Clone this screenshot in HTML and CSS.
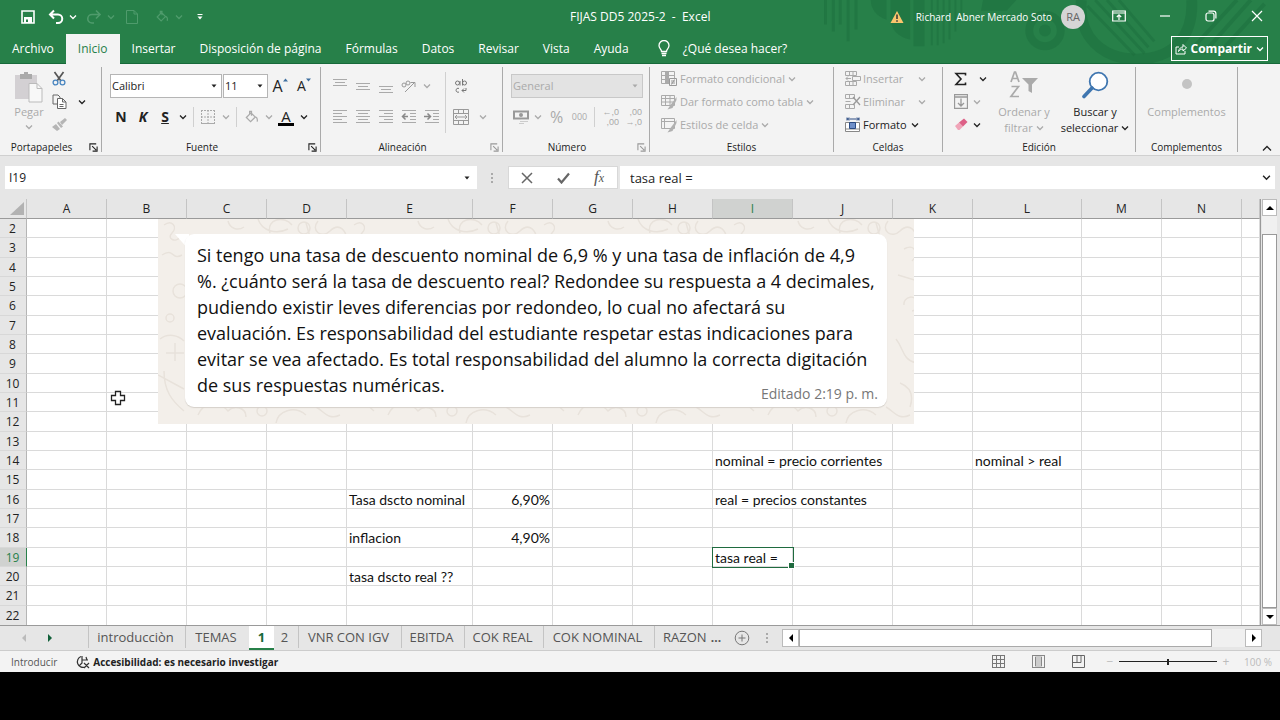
FILE: index.html
```html
<!DOCTYPE html>
<html lang="es">
<head>
<meta charset="utf-8">
<meta name="viewport" content="width=device-width, initial-scale=1">
<title>FIJAS DD5 2025-2 - Excel</title>
<link rel="stylesheet" href="styles.css">
</head>
<body>
<svg class="defs" aria-hidden="true">
  <symbol id="chev" viewBox="0 0 8 8"><path d="M1 2.5 4 5.5 7 2.5" fill="none" stroke="currentColor" stroke-width="1.3"/></symbol>
  <symbol id="tri" viewBox="0 0 8 8"><path d="M1.5 2.5h5L4 5.5z" fill="currentColor"/></symbol>
  <symbol id="launch" viewBox="0 0 10 10"><path d="M1 8V1h7M3.5 3.5 8 8M9 4v5H4" fill="none" stroke="currentColor" stroke-width="1.2"/></symbol>
  <symbol id="bucket" viewBox="0 0 16 16"><path d="M2.5 8 7.5 3l4.500 4.500-5 5zM6 5V1.500h2V6M12.500 7.500c2 1 2 3 1.500 5" fill="none" stroke="currentColor" stroke-width="1.300"/></symbol>
</svg>

<div class="window">
  <header class="top">
    <svg class="top-art" viewBox="0 0 470 64" aria-hidden="true">
      <g stroke="#1b6e3e" stroke-opacity=".5" fill="none">
        <path d="M12 0v25M20 0v32M27 0v25M35 0v42M43 0v30" stroke-width="3"/>
        <path d="M107 0v47" stroke-width="11"/>
        <path d="M120 0v46M126 0v46M132 0v44M138 0v40M144 0v32M150 0v18" stroke-width="2"/>
        <circle cx="235" cy="31" r="16" stroke-width="8"/>
        <path d="M272 0c-4 36 20 60 56 60 40 0 58-26 56-60" stroke-width="11"/>
        <path d="m278 6 48 50M286 0l50 54M298 0l42 48M310 0l36 42" stroke-width="3"/>
        <path d="m384 50 46-50M396 54l48-54M412 54l46-50" stroke-width="4"/>
      </g>
      <g fill="#1b6e3e" fill-opacity=".5"><path d="M58 0h16v20c-10-3-16-11-16-20zM78 0h20v40c-12-2-20-10-20-22zM172 0h34l-10 11h-26z"/><circle cx="235" cy="31" r="6"/></g>
    </svg>
    <div class="titlebar">
      <div class="quick">
        <button class="q" aria-label="Guardar"><svg width="14" height="14" viewBox="0 0 14 14"><path d="M1 1h12v12H1z" fill="none" stroke="#fff" stroke-width="1.600"/><path d="M3 2h8v4H3z" fill="#278049"/><path d="M3 7h8v6H3z" fill="#fff"/><path d="M5 9.500h2V12H5z" fill="#278049"/></svg></button>
        <button class="q" aria-label="Deshacer"><svg width="16" height="16" viewBox="0 0 16 16"><path d="M6 1.500 2 5.500l4 4M2.500 5.500H10a4 4 0 0 1 0 8.500H8" fill="none" stroke="#fff" stroke-width="2"/></svg></button>
        <button class="q-c" aria-label="Opciones de deshacer"><svg width="8" height="8"><use href="#chev"/></svg></button>
        <button class="q dim" aria-label="Rehacer"><svg width="16" height="16" viewBox="0 0 16 16"><path d="m10 1.500 4 4-4 4M13.500 5.500H6A4 4 0 0 0 6 14h2" fill="none" stroke="currentColor" stroke-width="1.600"/></svg></button>
        <button class="q-c dim" aria-label="Opciones de rehacer"><svg width="8" height="8"><use href="#chev"/></svg></button>
        <button class="q dim" aria-label="Nuevo"><svg width="14" height="16" viewBox="0 0 14 16"><path d="M1.500 1.500H9L12.500 5v9.500h-11zM9 1.500V5h3.500" fill="none" stroke="currentColor"/></svg></button>
        <button class="q dim fill" aria-label="Color de relleno"><svg width="14" height="14"><use href="#bucket"/></svg></button>
        <button class="q-c dim" aria-label="Opciones de relleno"><svg width="8" height="8"><use href="#chev"/></svg></button>
        <button class="q" aria-label="Personalizar barra"><svg width="8" height="8" viewBox="0 0 8 8"><path d="M1.500 1.500h5" stroke="#fff"/><path d="M1.500 3.500h5L4 6.500z" fill="#fff"/></svg></button>
      </div>
      <h1 class="doc">FIJAS DD5 2025-2&nbsp; -&nbsp; Excel</h1>
      <div class="account">
        <svg width="14" height="14" viewBox="0 0 14 14" aria-hidden="true"><path d="M7 1 13.500 13H.5z" fill="#fbc56d"/><path d="M7 4.500v4.500M7 10.200v1.600" stroke="#333" stroke-width="1.500"/></svg>
        <span>Richard&nbsp; Abner Mercado Soto</span>
        <button class="avatar">RA</button>
      </div>
      <div class="wincontrols">
        <button aria-label="Opciones de la cinta"><svg width="14" height="12" viewBox="0 0 14 12"><path d="M.7 1h12.600v10H.7zM.7 3h12.600M7 10V5M4.800 7 7 4.800 9.200 7" fill="none" stroke="#fff" stroke-width="1.200"/></svg></button>
        <button aria-label="Minimizar"><svg width="12" height="12" viewBox="0 0 12 12"><path d="M1 6h10" stroke="#fff" stroke-width="1.200"/></svg></button>
        <button aria-label="Restaurar"><svg width="12" height="12" viewBox="0 0 12 12"><rect x="1" y="3" width="8" height="8" rx="2" fill="none" stroke="#fff" stroke-width="1.200"/><path d="M3.500 1.200H8.500a2.500 2.500 0 0 1 2.400 2.400V8.500" fill="none" stroke="#fff" stroke-width="1.200"/></svg></button>
        <button aria-label="Cerrar"><svg width="12" height="12" viewBox="0 0 12 12"><path d="m1 1 10 10M11 1 1 11" stroke="#fff" stroke-width="1.200"/></svg></button>
      </div>
    </div>
    <nav class="tabs">
      <button>Archivo</button><button class="on">Inicio</button><button>Insertar</button><button>Disposición de página</button><button>Fórmulas</button><button>Datos</button><button>Revisar</button><button>Vista</button><button>Ayuda</button>
      <button class="tell"><svg width="12" height="17" viewBox="0 0 12 17" aria-hidden="true"><path d="M3.500 11.500C3.500 9 1 8.500 1 5.500a5 5 0 0 1 10 0c0 3-2.500 3.500-2.500 6zM3.500 13.500h5M4 15.500h4" fill="none" stroke="#fff" stroke-width="1.300"/></svg>¿Qué desea hacer?</button>
      <button class="share"><svg width="12" height="12" viewBox="0 0 12 12" aria-hidden="true"><path d="M4 4H1v7h9V8M3.500 8.500C4 5.500 6 4 8 4V1.500L11.500 5 8 8V6C6 6 4.500 7 3.500 8.500z" fill="none" stroke="#fff"/></svg>Compartir<svg width="8" height="8"><use href="#chev"/></svg></button>
    </nav>
  </header>

  <section class="ribbon" aria-label="Cinta de opciones">
    <div class="group g-clip">
      <div class="gbody">
        <button class="big off paste"><svg width="30" height="32" viewBox="0 0 30 32" aria-hidden="true"><path d="M1 4h22v24H1z" fill="#d3d0d3"/><path d="M6 3h4V1h4v2h4v5H6z" fill="#aaa"/><path d="M15 12.500h8l5 5V31H15z" fill="#f8f8f8" stroke="#bbb"/><path d="M23 12.500v5h5" fill="none" stroke="#bbb"/></svg><span>Pegar</span><svg width="8" height="8"><use href="#chev"/></svg></button>
        <div class="stack">
          <button class="line" aria-label="Cortar"><svg width="14" height="15" viewBox="0 0 14 15"><path d="M2.500 1 9 10M11.500 1 5 10" stroke="#555" stroke-width="1.700"/><circle cx="3.500" cy="11.500" r="2.400" fill="none" stroke="#4a86c0" stroke-width="1.300"/><circle cx="10.500" cy="11.500" r="2.400" fill="none" stroke="#4a86c0" stroke-width="1.300"/></svg></button>
          <button class="line" aria-label="Copiar"><svg width="15" height="15" viewBox="0 0 15 15"><path d="M5 10H1V1h5l2 2v1" fill="none" stroke="#666"/><path d="M5.500 4.500h5L14 8v6.500H5.500zM10.500 4.500V8H14M7.500 10.500h4M7.500 12.500h4" fill="#fff" stroke="#666"/></svg><svg class="far" width="8" height="8"><use href="#chev"/></svg></button>
          <button class="line off" aria-label="Copiar formato"><svg width="15" height="13" viewBox="0 0 15 13"><path d="m8 4 5-4 2 2-5 5zM6.500 3.500l4.500 5-2 1.500L5 5zM4 6l4 5-3 2-5-4z" fill="#b5b5b5"/></svg></button>
        </div>
      </div>
      <footer>Portapapeles<button class="launch" aria-label="Portapapeles, más opciones"><svg width="9" height="9"><use href="#launch"/></svg></button></footer>
    </div>

    <div class="group g-font">
      <div class="gbody rows">
        <div class="row">
          <span class="combo name"><select aria-label="Fuente"><option>Calibri</option></select><svg width="8" height="8"><use href="#tri"/></svg></span>
          <span class="combo size"><select aria-label="Tamaño de fuente"><option>11</option></select><svg width="8" height="8"><use href="#tri"/></svg></span>
          <button class="grow" aria-label="Aumentar tamaño de fuente"><span>A</span><svg width="5" height="4" viewBox="0 0 5 4"><path d="M0 3.500 2.500.5 5 3.500z" fill="#3f6f9f"/></svg></button>
          <button class="grow small" aria-label="Disminuir tamaño de fuente"><span>A</span><svg width="5" height="4" viewBox="0 0 5 4"><path d="M0 .5h5L2.500 3.500z" fill="#3f6f9f"/></svg></button>
        </div>
        <div class="row r2">
          <button class="b22 bold">N</button><button class="b22 bold ital">K</button><button class="b22 bold und">S</button><button class="b14" aria-label="Subrayado"><svg width="8" height="8"><use href="#chev"/></svg></button><i class="sep"></i>
          <button class="b22 off" aria-label="Bordes"><svg width="16" height="16" viewBox="0 0 16 16"><path d="M1.500 1v13M8 1v13M14.500 1v13M1 1.500h14M1 8h14" fill="none" stroke="#aaa" stroke-dasharray="2 1"/><path d="M1 14.500h14" stroke="#aaa"/></svg></button><button class="b14 off" aria-label="Más bordes"><svg width="8" height="8"><use href="#chev"/></svg></button><i class="sep"></i>
          <button class="b22 off" aria-label="Relleno"><svg width="15" height="15"><use href="#bucket"/></svg></button><button class="b14 off" aria-label="Más rellenos"><svg width="8" height="8"><use href="#chev"/></svg></button>
          <button class="b22 fcolor" aria-label="Color de fuente">A</button><button class="b14" aria-label="Más colores"><svg width="8" height="8"><use href="#chev"/></svg></button>
        </div>
      </div>
      <footer>Fuente<button class="launch" aria-label="Fuente, más opciones"><svg width="9" height="9"><use href="#launch"/></svg></button></footer>
    </div>

    <div class="group g-align">
      <div class="gbody rows off">
        <div class="row">
          <button class="b23" aria-label="Alinear arriba"><svg width="14" height="14" viewBox="0 0 14 14"><path d="M0 .5h14M2 3.500h10M0 6.500h14" stroke="#aaa"/></svg></button><button class="b23" aria-label="Alinear al medio"><svg width="14" height="14" viewBox="0 0 14 14"><path d="M0 4.500h14M2 7.500h10M0 10.500h14" stroke="#aaa"/></svg></button><button class="b23" aria-label="Alinear abajo"><svg width="14" height="14" viewBox="0 0 14 14"><path d="M0 7.500h14M2 10.500h10M0 13.500h14" stroke="#aaa"/></svg></button><button class="b23" aria-label="Orientación"><svg width="16" height="14" viewBox="0 0 16 14"><path d="m4 13 9-9M9.500 3.500H14V8" fill="none" stroke="#999"/><circle cx="3" cy="6" r="2" fill="none" stroke="#999"/><circle cx="7" cy="4" r="2" fill="none" stroke="#999"/></svg></button><button class="b14" aria-label="Más orientación"><svg width="8" height="8"><use href="#chev"/></svg></button>
        </div>
        <div class="row r2">
          <button class="b23" aria-label="Izquierda"><svg width="14" height="14" viewBox="0 0 14 14"><path d="M0 .5h14M0 3.500h9M0 6.500h14M0 9.500h9M0 12.500h14" stroke="#aaa"/></svg></button><button class="b23" aria-label="Centrar"><svg width="14" height="14" viewBox="0 0 14 14"><path d="M0 .5h14M2 3.500h10M0 6.500h14M2 9.500h10M0 12.500h14" stroke="#aaa"/></svg></button><button class="b23" aria-label="Derecha"><svg width="14" height="14" viewBox="0 0 14 14"><path d="M0 .5h14M5 3.500h9M0 6.500h14M5 9.500h9M0 12.500h14" stroke="#aaa"/></svg></button><button class="b23" aria-label="Disminuir sangría"><svg width="16" height="14" viewBox="0 0 16 14"><path d="M1 .5h14M9 3.500h6M9 6.500h6M9 9.500h6M1 12.500h14" stroke="#aaa"/><path d="M7 6.500H2M4.500 3.500l-3 3 3 3" fill="none" stroke="#888" stroke-width="1.500"/></svg></button><button class="b23" aria-label="Aumentar sangría"><svg width="16" height="14" viewBox="0 0 16 14"><path d="M1 .5h14M9 3.500h6M9 6.500h6M9 9.500h6M1 12.500h14" stroke="#aaa"/><path d="M0 6.500h6M3.500 3.500l3 3-3 3" fill="none" stroke="#888" stroke-width="1.500"/></svg></button>
        </div>
      </div>
      <div class="gbody rows off merge">
        <div class="row"><button class="b22 wrap" aria-label="Ajustar texto"><svg width="14" height="16" viewBox="0 0 14 16"><circle cx="3.500" cy="5" r="2" fill="none" stroke="#777"/><path d="M6 3v4.500M8.500 1v6.500M5 10.500a2 2 0 1 0 0 3.500M12 10v2.500H8M10 10.500l-2 2 2 2" fill="none" stroke="#777"/><circle cx="10.500" cy="5" r="2" fill="none" stroke="#777"/></svg></button></div>
        <div class="row r2"><button class="b22" aria-label="Combinar y centrar"><svg width="16" height="16" viewBox="0 0 16 16"><path d="M.5.500h15v15H.5zM.5 4.500h15M.5 11.500h15M5.500.5v4M10.500.5v4M5.500 11.500v4M10.500 11.500v4M2 8h12M4 6 2 8l2 2M12 6l2 2-2 2" fill="none" stroke="#999"/></svg></button><button class="b22" aria-label="Más combinar"><svg width="8" height="8"><use href="#chev"/></svg></button></div>
      </div>
      <footer>Alineación<button class="launch pale" aria-label="Alineación, más opciones"><svg width="9" height="9"><use href="#launch"/></svg></button></footer>
    </div>

    <div class="group g-num">
      <div class="gbody rows">
        <div class="row"><span class="combo general"><select aria-label="Formato de número" disabled><option>General</option></select><svg width="8" height="8"><use href="#tri"/></svg></span></div>
        <div class="row r2 off">
          <button class="b22" aria-label="Moneda"><svg width="17" height="15" viewBox="0 0 17 15"><path d="M1 1.500h14v7H1z" fill="none" stroke="#999" stroke-width="2"/><circle cx="8" cy="5" r="2" fill="#999"/><path d="M8 9.500h8M7 11.500h8M6 13.500h5" stroke="#ccc"/></svg></button><button class="b14" aria-label="Más monedas"><svg width="8" height="8"><use href="#chev"/></svg></button>
          <button class="b23 pct" aria-label="Porcentaje">%</button><button class="b23 mil" aria-label="Millares">000</button><i class="sep"></i>
          <button class="b23 dec"><span>←,0</span><span>,00</span></button><button class="b23 dec"><span>,00</span><span>→,0</span></button>
        </div>
      </div>
      <footer>Número<button class="launch pale" aria-label="Número, más opciones"><svg width="9" height="9"><use href="#launch"/></svg></button></footer>
    </div>

    <div class="group g-style">
      <div class="gbody stack off">
        <button class="line"><svg width="16" height="16" viewBox="0 0 16 16" aria-hidden="true"><path d="M.5.500h13v12H.5zM.5 4.500h13M.5 8.500h13M4.500.5v12" fill="none" stroke="#aaa"/><path d="M5 1h3v11H5z" fill="#aaa"/><path d="M8.500 7.500h7v7h-7zM10 10h4M10 12h4M13.500 8.500l-3 5" fill="#f3f3f3" stroke="#999"/></svg>Formato condicional<svg width="8" height="8"><use href="#chev"/></svg></button>
        <button class="line"><svg width="16" height="16" viewBox="0 0 16 16" aria-hidden="true"><path d="M.5 1.500h13v10H.5zM.5 4.500h13M.5 8h13M4.500 1.500v10M9 1.500v10" fill="none" stroke="#aaa"/><path d="m15.500 3-6 8-3 4.500 5-1.500 4-8z" fill="#b0b0b0"/></svg>Dar formato como tabla<svg width="8" height="8"><use href="#chev"/></svg></button>
        <button class="line"><svg width="16" height="16" viewBox="0 0 16 16" aria-hidden="true"><path d="M.5 1.500h13v10H.5zM.5 4.500h13M3.500 1.500v10" fill="none" stroke="#aaa"/><path d="m15.500 3-6 8-3 4.500 5-1.500 4-8z" fill="#b0b0b0"/></svg>Estilos de celda<svg width="8" height="8"><use href="#chev"/></svg></button>
      </div>
      <footer>Estilos</footer>
    </div>

    <div class="group g-cells">
      <div class="gbody stack">
        <button class="line off"><svg width="16" height="16" viewBox="0 0 16 16" aria-hidden="true"><path d="M.5.500h11v4H.5zM.5 10.500h11v4H.5zM4.500.5v4M8 .5v4M4.500 10.500v4M8 10.500v4M7.500 5.500h8v4h-8zM6 7.500H1M3 5.500l-2 2 2 2" fill="none" stroke="#aaa"/></svg><span class="lbl">Insertar</span><svg width="8" height="8"><use href="#chev"/></svg></button>
        <button class="line off"><svg width="16" height="16" viewBox="0 0 16 16" aria-hidden="true"><path d="M.5.500h9v4h-9zM.5 10.500h9v4h-9zM4.500.5v4M4.500 10.500v4M.5 7.500h5" fill="none" stroke="#aaa"/><path d="m8 3 7 8M15 3l-7 8" stroke="#999" stroke-width="1.300"/></svg><span class="lbl">Eliminar</span><svg width="8" height="8"><use href="#chev"/></svg></button>
        <button class="line"><svg width="16" height="16" viewBox="0 0 16 16" aria-hidden="true"><path d="M2 .5v3M14 .5v3M2 2h12M4 .5 2.500 2 4 3.500M12 .5 13.500 2 12 3.500" fill="none" stroke="#2b4b82"/><path d="M.5 5.500h14v9H.5zM.5 12h14" fill="#fff" stroke="#888"/><path d="M4.500 5.500h6v6h-6z" fill="#6f8fc8" stroke="#2b4b82"/></svg><span class="fmt">Formato</span><svg width="8" height="8"><use href="#chev"/></svg></button>
      </div>
      <footer>Celdas</footer>
    </div>

    <div class="group g-edit">
      <div class="gbody stack">
        <button class="line sum" aria-label="Autosuma"><svg width="13" height="14" viewBox="0 0 13 14"><path d="M11.500 3.500V1.500H2L7 7l-5 5.500h9.500v-2" fill="none" stroke="#222" stroke-width="1.600"/></svg><svg width="8" height="8"><use href="#chev"/></svg></button>
        <button class="line off" aria-label="Rellenar"><svg width="14" height="15" viewBox="0 0 14 15"><path d="M.5.500h13v14H.5zM.5 3h13M7 4.500V12M4 9l3 3 3-3" fill="none" stroke="#999" stroke-width="1.300"/></svg><svg width="8" height="8"><use href="#chev"/></svg></button>
        <button class="line" aria-label="Borrar"><svg width="14" height="13" viewBox="0 0 14 13"><path d="m1 8 4-3.500 4 4L5.500 12H4z" fill="#f0a4b8"/><path d="m5 4.500 5-4 3.500 3.500-4.500 4.500z" fill="#dd5f86"/></svg><svg width="8" height="8"><use href="#chev"/></svg></button>
      </div>
      <button class="big off sort"><svg width="30" height="28" viewBox="0 0 30 28" aria-hidden="true"><path d="m2 11 3.500-10h1L10 11M3.500 7.500h5M2.500 15.500h7L2 25.500h8" fill="none" stroke="#aaa" stroke-width="1.700"/><path d="M13 7h16l-6 6.500V22l-3.500-2v-6.500z" fill="#aaa"/></svg><span>Ordenar y</span><span>filtrar <svg width="8" height="8"><use href="#chev"/></svg></span></button>
      <button class="big find"><svg width="28" height="28" viewBox="0 0 28 28" aria-hidden="true"><circle cx="17.500" cy="10.500" r="8.800" fill="#fff" stroke="#3f76b0" stroke-width="1.800"/><path d="m11 17-8 8.500" stroke="#3f76b0" stroke-width="3.600" stroke-linecap="round"/></svg><span>Buscar y</span><span>seleccionar <svg width="8" height="8"><use href="#chev"/></svg></span></button>
      <footer>Edición</footer>
    </div>

    <div class="group g-add">
      <button class="big off"><svg width="28" height="28" viewBox="0 0 28 28" aria-hidden="true"><circle cx="14" cy="13" r="5" fill="#c3c3c3"/></svg><span>Complementos</span></button>
      <footer>Complementos</footer>
    </div>
    <button class="collapse" aria-label="Contraer la cinta"><svg width="10" height="7" viewBox="0 0 10 7"><path d="m1 5.500 4-4 4 4" fill="none" stroke="#222" stroke-width="1.300"/></svg></button>
  </section>

  <section class="fbar" aria-label="Barra de fórmulas">
    <div class="namebox"><input aria-label="Cuadro de nombres" value="I19"><svg width="8" height="8"><use href="#tri"/></svg></div>
    <svg class="dots" width="4" height="12" viewBox="0 0 4 12" aria-hidden="true"><path d="M1 1h2v2H1zM1 5h2v2H1zM1 9h2v2H1z" fill="#aaa"/></svg>
    <div class="fbuttons">
      <button aria-label="Cancelar"><svg width="12" height="12" viewBox="0 0 12 12"><path d="m1 1 10 10M11 1 1 11" stroke="#666" stroke-width="1.500"/></svg></button>
      <button aria-label="Introducir"><svg width="13" height="12" viewBox="0 0 13 12"><path d="m1 6.500 3.500 4L12 1.500" fill="none" stroke="#666" stroke-width="2.200"/></svg></button>
      <button class="fx" aria-label="Insertar función">f<small>x</small></button>
    </div>
    <div class="formula"><input aria-label="Fórmula" value="tasa real ="><button aria-label="Expandir"><svg width="9" height="9"><use href="#chev"/></svg></button></div>
  </section>

  <main class="sheet">
    <div class="grid">
      <table>
        <colgroup><col class="c-n"><col span="4" class="c-s"><col class="c-e"><col span="4" class="c-s"><col class="c-j"><col class="c-s"><col class="c-l"><col span="2" class="c-s"><col></colgroup>
        <thead><tr><th class="corner"><svg width="14" height="13" viewBox="0 0 14 13" aria-hidden="true"><path d="M14 0v13H0z" fill="#b2b2b2"/></svg></th><th>A</th><th>B</th><th>C</th><th>D</th><th>E</th><th>F</th><th>G</th><th>H</th><th class="sel">I</th><th>J</th><th>K</th><th>L</th><th>M</th><th>N</th><th></th></tr></thead>
        <tbody>
          <tr><th>2</th><td></td><td></td><td></td><td></td><td></td><td></td><td></td><td></td><td></td><td></td><td></td><td></td><td></td><td></td><td></td></tr>
          <tr><th>3</th><td></td><td></td><td></td><td></td><td></td><td></td><td></td><td></td><td></td><td></td><td></td><td></td><td></td><td></td><td></td></tr>
          <tr><th>4</th><td></td><td></td><td></td><td></td><td></td><td></td><td></td><td></td><td></td><td></td><td></td><td></td><td></td><td></td><td></td></tr>
          <tr><th>5</th><td></td><td></td><td></td><td></td><td></td><td></td><td></td><td></td><td></td><td></td><td></td><td></td><td></td><td></td><td></td></tr>
          <tr><th>6</th><td></td><td></td><td></td><td></td><td></td><td></td><td></td><td></td><td></td><td></td><td></td><td></td><td></td><td></td><td></td></tr>
          <tr><th>7</th><td></td><td></td><td></td><td></td><td></td><td></td><td></td><td></td><td></td><td></td><td></td><td></td><td></td><td></td><td></td></tr>
          <tr><th>8</th><td></td><td></td><td></td><td></td><td></td><td></td><td></td><td></td><td></td><td></td><td></td><td></td><td></td><td></td><td></td></tr>
          <tr><th>9</th><td></td><td></td><td></td><td></td><td></td><td></td><td></td><td></td><td></td><td></td><td></td><td></td><td></td><td></td><td></td></tr>
          <tr><th>10</th><td></td><td></td><td></td><td></td><td></td><td></td><td></td><td></td><td></td><td></td><td></td><td></td><td></td><td></td><td></td></tr>
          <tr><th>11</th><td></td><td></td><td></td><td></td><td></td><td></td><td></td><td></td><td></td><td></td><td></td><td></td><td></td><td></td><td></td></tr>
          <tr><th>12</th><td></td><td></td><td></td><td></td><td></td><td></td><td></td><td></td><td></td><td></td><td></td><td></td><td></td><td></td><td></td></tr>
          <tr><th>13</th><td></td><td></td><td></td><td></td><td></td><td></td><td></td><td></td><td></td><td></td><td></td><td></td><td></td><td></td><td></td></tr>
          <tr><th>14</th><td></td><td></td><td></td><td></td><td></td><td></td><td></td><td></td><td colspan="2">nominal = precio corrientes</td><td></td><td>nominal &gt; real</td><td></td><td></td><td></td></tr>
          <tr><th>15</th><td></td><td></td><td></td><td></td><td></td><td></td><td></td><td></td><td></td><td></td><td></td><td></td><td></td><td></td><td></td></tr>
          <tr><th>16</th><td></td><td></td><td></td><td></td><td>Tasa dscto nominal</td><td class="num">6,90%</td><td></td><td></td><td colspan="2">real = precios constantes</td><td></td><td></td><td></td><td></td><td></td></tr>
          <tr><th>17</th><td></td><td></td><td></td><td></td><td></td><td></td><td></td><td></td><td></td><td></td><td></td><td></td><td></td><td></td><td></td></tr>
          <tr><th>18</th><td></td><td></td><td></td><td></td><td>inflacion</td><td class="num">4,90%</td><td></td><td></td><td></td><td></td><td></td><td></td><td></td><td></td><td></td></tr>
          <tr><th class="sel">19</th><td></td><td></td><td></td><td></td><td></td><td></td><td></td><td></td><td class="active">tasa real =</td><td></td><td></td><td></td><td></td><td></td><td></td></tr>
          <tr><th>20</th><td></td><td></td><td></td><td></td><td>tasa dscto real ??</td><td></td><td></td><td></td><td></td><td></td><td></td><td></td><td></td><td></td><td></td></tr>
          <tr><th>21</th><td></td><td></td><td></td><td></td><td></td><td></td><td></td><td></td><td></td><td></td><td></td><td></td><td></td><td></td><td></td></tr>
          <tr><th>22</th><td></td><td></td><td></td><td></td><td></td><td></td><td></td><td></td><td></td><td></td><td></td><td></td><td></td><td></td><td></td></tr>
        </tbody>
      </table>
      <figure class="chat">
        <svg class="doodles" aria-hidden="true" width="100%" height="100%">
          <defs><pattern id="doodle" width="190" height="205" patternUnits="userSpaceOnUse"><g fill="none" stroke="#e8e2db" stroke-width="1.500">
            <path d="M6 6c8-6 14 2 8 8s4 10 8 4M4 36c12-8 10 6 20 0M70 2c2 8 10 10 16 6"/><circle cx="22" cy="72" r="7"/><circle cx="12" cy="99" r="4"/>
            <path d="M2 120c8-6 18-4 24 2M8 134h18M17 124v18M0 156l26 14M6 152c0 20 8 30 20 40M40 196c6-14 22-14 30-4 6-6 18-4 18 6"/>
            <path d="M100 0c4 12 18 16 30 10M112 14c-4-14 14-18 22-8M148 4l4 14M160 2c-8 10 4 18 12 10s14-2 16 4"/><circle cx="146" cy="9" r="6"/><circle cx="104" cy="192" r="5"/>
            <path d="M118 204c2-12 18-18 30-8M158 188c8 4 12 14 24 8M176 30c10-6 16 4 8 12M170 56l20 6M176 86a7 7 0 1 1 8 6M168 120c8 10 6 20 20 24M172 164c10 4 14 12 10 24"/>
          </g></pattern></defs>
          <rect width="100%" height="100%" fill="url(#doodle)"/>
        </svg>
        <svg class="tail" width="14" height="16" viewBox="0 0 14 16" aria-hidden="true"><path d="M0 0h14v16z" fill="#fff"/></svg>
        <blockquote class="bubble">Si tengo una tasa de descuento nominal de 6,9 % y una tasa de inflación de 4,9<br>%. ¿cuánto será la tasa de descuento real? Redondee su respuesta a 4 decimales,<br>pudiendo existir leves diferencias por redondeo, lo cual no afectará su<br>evaluación. Es responsabilidad del estudiante respetar estas indicaciones para<br>evitar se vea afectado. Es total responsabilidad del alumno la correcta digitación<br>de sus respuestas numéricas.<span class="stamp">Editado 2:19 p. m.</span></blockquote>
      </figure>
      <svg class="cursor" width="16" height="16" viewBox="0 0 16 16" aria-hidden="true"><path d="M5.500 1.500h5v4h4v5h-4v4h-5v-4h-4v-5h4z" fill="#fff" stroke="#222" stroke-width="1.300"/></svg>
    </div>
    <div class="vscroll">
      <button aria-label="Subir"><svg width="8" height="8" viewBox="0 0 8 8"><path d="M0 6h8L4 2z"/></svg></button>
      <div class="vtrack"><div class="vthumb"></div></div>
      <button aria-label="Bajar"><svg width="8" height="8" viewBox="0 0 8 8"><path d="M0 2h8L4 6z"/></svg></button>
    </div>
  </main>

  <nav class="sheets" aria-label="Hojas">
    <div class="arrows"><button aria-label="Hoja anterior"><svg width="8" height="8" viewBox="0 0 8 8"><path d="M6 0v8L2 4z" fill="#bbb"/></svg></button><button aria-label="Hoja siguiente"><svg width="8" height="8" viewBox="0 0 8 8"><path d="M2 0v8l4-4z" fill="#12613a"/></svg></button></div>
    <div class="stabs"><button>introducciòn</button><button>TEMAS</button><button class="on">1</button><button>2</button><button>VNR CON IGV</button><button>EBITDA</button><button>COK REAL</button><button>COK NOMINAL</button><button class="cut">RAZON</button></div>
    <button class="more">...</button>
    <button class="plus" aria-label="Hoja nueva"><svg width="16" height="16" viewBox="0 0 16 16"><circle cx="8" cy="8" r="6.800" fill="none" stroke="#777"/><path d="M8 4.500v7M4.500 8h7" stroke="#777"/></svg></button>
    <svg class="dots" width="4" height="12" viewBox="0 0 4 12" aria-hidden="true"><path d="M1 1h2v2H1zM1 5h2v2H1zM1 9h2v2H1z" fill="#aaa"/></svg>
    <div class="hscroll"><button aria-label="Izquierda"><svg width="8" height="8" viewBox="0 0 8 8"><path d="M6 0v8L2 4z"/></svg></button><div class="htrack"><div class="hthumb"></div></div><button aria-label="Derecha"><svg width="8" height="8" viewBox="0 0 8 8"><path d="M2 0v8l4-4z"/></svg></button></div>
  </nav>

  <footer class="status">
    <span class="mode">Introducir</span>
    <button class="a11y"><svg width="14" height="14" viewBox="0 0 14 14" aria-hidden="true"><path d="M5 1.500a5.500 5.500 0 1 0 4 10.500M6 1v4h6M6 5v3l-3 3M8 8l5 5M13 8l-5 5M10 2l1 3" fill="none" stroke="#333" stroke-width="1.200"/></svg>Accesibilidad: es necesario investigar</button>
    <div class="views">
      <button aria-label="Normal"><svg width="13" height="13" viewBox="0 0 13 13"><path d="M.5 0v12.500M4.500 0v12.500M8.500 0v12.500M12.500 0v12.500M0 4.500h13M0 8.500h13M0 12.500h13M0 .5h13" stroke="#777"/></svg></button>
      <button aria-label="Diseño de página"><svg width="13" height="13" viewBox="0 0 13 13"><path d="M3 0h7v13H3z" fill="#ccc"/><path d="M.5 0v13M3.500 2v9M9.500 2v9M12.500 0v13M0 .5h13M0 12.500h13" stroke="#888"/></svg></button>
      <button aria-label="Salto de página"><svg width="13" height="13" viewBox="0 0 13 13"><path d="M.5.500h12v12H.5zM.5 7.500h8.500V.5M5 .5v7" fill="none" stroke="#666"/></svg></button>
    </div>
    <div class="zoom"><button aria-label="Alejar">−</button><input type="range" min="10" max="190" value="100" aria-label="Zoom"><button aria-label="Acercar">+</button><span>100 %</span></div>
  </footer>
</div>
</body>
</html>
```
FILE: styles.css
```css
* { box-sizing: border-box; }
html, body { height: 100%; }
body { margin: 0; background: #000; color: #222; font: 12px/16px "Open Sans", "Noto Sans", sans-serif; }
button, input, select { font: inherit; color: inherit; border: 0; background: none; padding: 0; margin: 0; border-radius: 0; }
svg { display: block; flex: none; }
.defs { position: absolute; width: 0; height: 0; }
.window { display: flex; flex-direction: column; background: #e6e6e6; }

/* title bar and ribbon tabs */
.top { position: relative; background: #278049; color: #fff; border-bottom: 1px solid #17693a; }
.top-art { position: absolute; right: 0; top: 0; width: 470px; height: 63px; }
.titlebar { position: relative; display: grid; grid-template-columns: 570px 1fr auto auto; height: 34px; }
.quick { display: flex; align-items: center; padding-left: 16px; }
.q { display: flex; justify-content: center; width: 24px; }
.q-c { display: flex; justify-content: center; width: 10px; margin-right: 4px; }
.quick .q:first-child { margin-right: 4px; }
.dim { color: #4f9b6c; }
.fill { margin-left: 6px; }
.doc { margin: 0; font-size: 12px; font-weight: 400; line-height: 34px; }
.account { display: flex; align-items: center; font-size: 10px; }
.account svg { margin-right: 12px; }
.avatar { width: 24px; height: 24px; margin: 0 11px 0 9px; border-radius: 50%; background: #d5d5d5; color: #666; font-size: 11px; }
.wincontrols { display: flex; align-items: center; }
.wincontrols button { display: flex; justify-content: center; width: 46px; padding-bottom: 2px; }
.tabs { position: relative; display: flex; height: 29px; padding-right: 12px; }
.tabs button { padding: 0 12px; }
.tabs .on { background: #f3f3f3; color: #278049; height: 30px; }
.tabs .tell { display: flex; align-items: center; gap: 13px; padding-left: 17px; }
.tabs .share { display: flex; align-items: center; gap: 4px; height: 25px; margin: 2px 0 0 auto; padding: 0 3px; border: 1px solid #fff; font-weight: 700; font-size: 12px; }

/* ribbon */
.ribbon { display: flex; height: 92px; padding: 3px 0 0; background: #f3f3f3; border-bottom: 1px solid #d0d0d0; font-size: 11px; }
.group { display: grid; grid-template-rows: 1fr 16px; justify-content: start; border-right: 1px solid #aaa; margin-bottom: 3px; flex: none; }
.group > * { grid-row: 1; min-height: 0; }
.group > footer { position: relative; grid-row: 2; grid-column: 1 / -1; text-align: center; font-size: 10px; line-height: 22px; }
.launch { position: absolute; right: 3px; top: 7px; }
.g-clip footer, .g-font footer, .g-align footer, .g-num footer { padding-right: 18px; }
.pale { color: #999; }
.off { color: #aaa; }
.g-clip { width: 102px; grid-template-columns: 100%; }
.g-font { width: 219px; grid-template-columns: 100%; }
.g-align { width: 182px; grid-template-columns: 124px 1fr; justify-content: stretch; }
.g-num { width: 147px; grid-template-columns: 100%; }
.g-style { width: 184px; grid-template-columns: 100%; }
.g-cells { width: 109px; grid-template-columns: 100%; }
.g-edit { width: 193px; grid-template-columns: 50px 62px 1fr; justify-content: stretch; }
.g-add { width: 102px; grid-template-columns: 100%; }
.g-clip .gbody { display: flex; padding-left: 9px; }
.big { display: flex; flex-direction: column; align-items: center; padding-top: 4px; }
.big > svg:first-child { height: 28px; margin-bottom: 5px; }
.big span { display: flex; align-items: center; gap: 3px; white-space: nowrap; }
.paste { width: 40px; }
.paste > svg:first-child { height: 32px; margin-bottom: 1px; }
.paste > svg:last-child { margin-top: 3px; }
.stack { display: flex; flex-direction: column; }
.line { display: flex; align-items: center; gap: 3px; height: 23px; white-space: nowrap; }
.g-clip .line { padding-left: 3px; }
.far { margin-left: 8px; }
.rows { padding: 7px 0 0 8px; }
.row { display: flex; align-items: center; height: 24px; }
.r2 { margin-top: 7px; }
.row button { display: flex; justify-content: center; align-items: center; }
.combo { display: flex; align-items: center; height: 24px; padding: 0 3px 0 1px; background: #fff; border: 1px solid #b5b5b5; }
.combo select { flex: 1; min-width: 0; appearance: none; }
.name { width: 112px; }
.size { width: 45px; margin-left: 1px; }
.general { width: 132px; background: #e3e3e3; border-color: #c8c8c8; color: #aaa; }
.general select { opacity: 1; color: #aaa; }
.grow { width: 24px; font-size: 16px; }
.grow svg { margin-bottom: 12px; }
.row .small { font-size: 14px; }
.b14 { width: 14px; }
.b22 { width: 22px; }
.b23 { width: 23px; }
.sep { width: 1px; height: 20px; margin: 0 3px; background: #d0d0d0; }
.bold { font-weight: 700; font-size: 14px; }
.ital { font-style: italic; }
.und { text-decoration: underline; }
.fcolor { height: 18px; margin: 0 3px 0 2px; font-size: 15px; border-bottom: 3px solid #000; width: 16px; }
.g-align .rows { padding-left: 7px; }
.g-align .merge { padding: 2px 0 0 4px; margin: 5px 0 3px; border-left: 1px solid #d0d0d0; }
.g-num .b22 { width: 20px; }
.pct { font-size: 16px; }
.mil { font-size: 9px; }
.row .dec { flex-direction: column; font: 9px/10px "Liberation Sans", sans-serif; align-items: flex-end; padding-right: 2px; }
.g-style .line { padding-left: 11px; }
.g-cells .line { padding-left: 11px; gap: 2px; }
.lbl { width: 53px; text-align: left; }
.fmt { margin-right: 2px; }
.g-edit .line { padding-left: 11px; gap: 5px; }
.g-edit .sum { gap: 12px; }
.collapse { margin: auto 8px 3px auto; }

/* formula bar */
.fbar { display: flex; align-items: center; height: 43px; padding: 0 5px; }
.namebox, .fbuttons, .formula { display: flex; align-items: center; height: 23px; background: #fff; }
.namebox { width: 472px; padding: 0 6px 0 4px; }
.namebox input, .formula input { flex: 1; min-width: 0; }
.formula input { font-size: 13px; }
.dots { margin: 0 14px 0 13px; }
.fbuttons { width: 110px; border: 1px solid #d8d8d8; }
.fbuttons button { display: flex; justify-content: center; align-items: baseline; flex: 1; }
.fx { font: italic 17px/20px "Liberation Serif", serif; color: #555; }
.fx small { font-size: 12px; }
.formula { flex: 1; margin-left: 2px; padding: 0 4px 0 10px; }

/* worksheet */
.sheet { display: flex; border-bottom: 1px solid #9a9a9a; }
.grid { position: relative; flex: 1; border-right: 1px solid #999; }
table { width: 100%; table-layout: fixed; border-collapse: separate; border-spacing: 0; background: #fff; }
.c-n { width: 27px; } .c-s { width: 80px; } .c-e { width: 126px; } .c-j { width: 100px; } .c-l { width: 109px; }
th { padding: 0; height: 19px; font-weight: 400; font-size: 12px; line-height: 15px; background: #e6e6e6; border-right: 1px solid #b5b5b5; border-bottom: 1px solid #d8d8d8; }
thead th { height: 20px; line-height: 18px; border-right-color: #c4c4c4; border-bottom-color: #9a9a9a; }
thead .corner { padding-left: 10px; }
tbody tr:nth-child(3n+2) th { height: 20px; }
tbody th:first-child { padding-right: 1px; }
th.sel { background: #d0d2d0; color: #278049; }
thead .sel { border-bottom-color: #278049; }
tbody .sel { border-right-color: #278049; }
td { padding: 0 2px; font: 14px/15px Lato, "Open Sans", sans-serif; color: #111; white-space: nowrap; border-right: 1px solid #dadada; border-bottom: 1px solid #dadada; }
tr:last-child > * { border-bottom: 0; }
thead tr:last-child > * { border-bottom: 1px solid #9a9a9a; }
.num { text-align: right; }
.active { position: relative; z-index: 1; outline: 1px solid #1f6b3f; }
.active::after { content: ""; position: absolute; right: -3px; bottom: -3px; width: 5px; height: 5px; background: #1f6b3f; border: 1px solid #fff; }
.chat { position: absolute; left: 158px; top: 20px; margin: 0; padding: 15px 27px 17px; background: #f3efea; }
.doodles { position: absolute; inset: 0; }
.tail { position: absolute; left: 17px; top: 15px; }
.bubble { position: relative; margin: 0; width: 702px; padding: 8px 0 9px 12px; background: #fff; border-radius: 9px; box-shadow: 0 1px 1px #d5d0ca; font-size: 18px; line-height: 26px; color: #111; white-space: nowrap; }
.stamp { position: absolute; right: 9px; bottom: 3px; font-size: 14px; line-height: 20px; color: #777; }
.cursor { position: absolute; left: 110px; top: 191px; }
.vscroll { display: flex; flex-direction: column; width: 19px; padding: 0 3px 0 1px; }
.vscroll button { display: flex; justify-content: center; align-items: center; height: 17px; background: #fff; border: 1px solid #bbb; }
.vtrack { flex: 1; padding-top: 18px; background: #f0f0f0; display: flex; }
.vthumb { flex: 1; background: #fff; border: 1px solid #999; }

/* sheet tabs */
.sheets { display: flex; align-items: center; height: 25px; border-bottom: 1px solid #ccc; color: #555; }
.arrows { display: flex; width: 88px; padding-left: 20px; gap: 18px; }
.stabs { display: grid; grid-template-columns: 97px 64px 25px 24px 103px 63px 79px 111px 50px; height: 24px; align-self: start; }
.stabs button { font-size: 13px; border-left: 1px solid #c4c4c4; white-space: nowrap; margin-bottom: 2px; padding-right: 3px; }
.stabs .on { background: #fff; color: #17693a; font-weight: 700; border: 0; border-bottom: 2px solid #278049; margin: 0; padding: 0; }
.stabs .on + button { border-left: 0; }
.stabs .cut { padding-left: 8px; text-align: left; }
.more { width: 24px; font-weight: 700; }
.plus { margin-left: 6px; }
.sheets .dots { margin: 0 13px 0 15px; }
.hscroll { display: flex; flex: 1; height: 18px; margin-right: 18px; background: #f0f0f0; }
.hscroll button { display: flex; align-items: center; justify-content: center; width: 17px; background: #fff; border: 1px solid #bbb; }
.htrack { flex: 1; display: flex; padding-right: 33px; }
.hthumb { flex: 1; background: #fff; border: 1px solid #aaa; }

/* status bar */
.status { display: flex; align-items: center; height: 21px; padding: 0 8px 0 11px; background: #f3f3f3; font-size: 10px; color: #555; }
.a11y { display: flex; align-items: center; gap: 3px; margin-left: 19px; font-weight: 700; color: #222; }
.views { display: flex; gap: 27px; margin-left: auto; }
.zoom { display: flex; align-items: center; margin-left: 19px; color: #bbb; }
.zoom button { width: 12px; font-size: 12px; }
.zoom span { margin-left: 12px; }
.zoom input { appearance: none; width: 98px; height: 1px; margin: 0 3px; background: #222; }
.zoom input::-webkit-slider-thumb { appearance: none; width: 2px; height: 6px; background: #222; }
```
